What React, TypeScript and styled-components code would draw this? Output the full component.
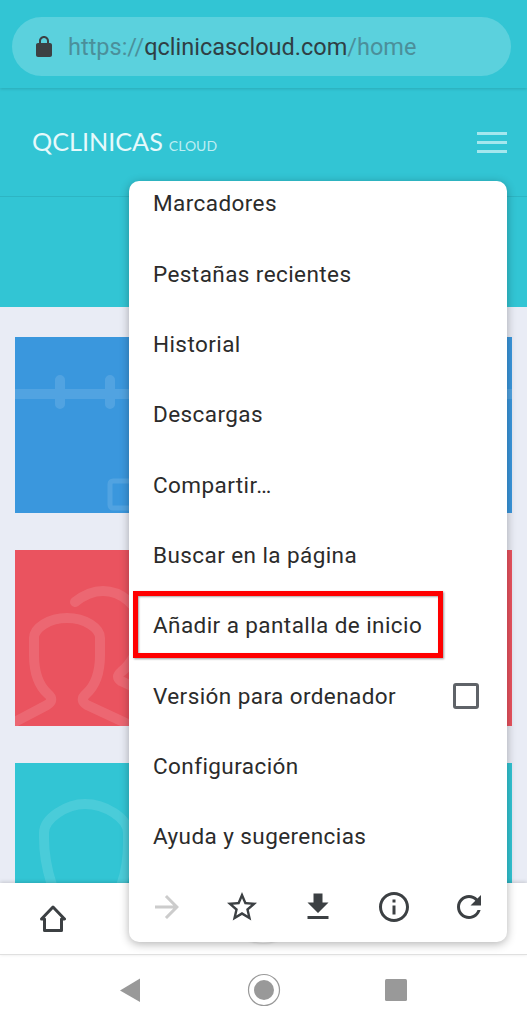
import React from 'react';
import styled, { createGlobalStyle } from 'styled-components';

const GlobalStyle = createGlobalStyle`
  html, body {
    margin: 0;
    padding: 0;
    background: #fff;
    font-family: Roboto, "Liberation Sans", sans-serif;
  }
`;

const Screen = styled.div`
  position: relative;
  display: flex;
  flex-direction: column;
  width: 527px;
  height: 1024px;
  overflow: hidden;
`;

const Toolbar = styled.div`
  position: relative;
  z-index: 2;
  height: 88px;
  box-sizing: border-box;
  padding: 17px 16px 12px 12px;
  background: #32c5d4;
  box-shadow: 0 1px 3px rgba(0, 0, 0, 0.14);
`;

const AddressBar = styled.div`
  display: flex;
  align-items: center;
  height: 59px;
  padding-left: 20px;
  border-radius: 30px;
  background: #5bd1dd;
  font-size: 23.5px;
  color: #4b8f9a;
`;

const LockIcon = styled.svg`
  width: 24px;
  height: 24px;
  margin-right: 12px;
  fill: #3c4043;
`;

const Domain = styled.span`
  color: #2f3f45;
`;

const SiteHeader = styled.header`
  display: flex;
  align-items: center;
  justify-content: space-between;
  height: 109px;
  box-sizing: border-box;
  padding: 0 20px 0 32px;
  background: #32c5d4;
  border-bottom: 1px solid #2db5c3;
`;

const Logo = styled.div`
  display: flex;
  align-items: baseline;
  gap: 6px;
  margin-top: -3px;
  font-family: Lato, sans-serif;
  font-size: 25.2px;
  color: #e6f9fb;
`;

const LogoSmall = styled.span`
  font-size: 14px;
  color: #bdeef3;
`;

const Hamburger = styled.div`
  display: flex;
  flex-direction: column;
  gap: 6px;
  width: 30px;
`;

const HamburgerBar = styled.span`
  height: 3px;
  background: #a5e7ee;
`;

const Hero = styled.div`
  height: 110px;
  background: #32c5d4;
`;

const Main = styled.main`
  flex: none;
  height: 576px;
  box-sizing: border-box;
  overflow: hidden;
  display: flex;
  flex-direction: column;
  gap: 37px;
  padding: 30px 15px 0;
  background: #e9ecf5;
`;

const Card = styled.div<{ $color: string }>`
  flex: none;
  height: 176px;
  background: ${(p) => p.$color};
`;

const Watermark = styled.svg`
  display: block;
  width: 100%;
  height: 100%;
  fill: none;
  stroke: rgba(255, 255, 255, 0.12);
  stroke-width: 10;
  stroke-linejoin: round;
  stroke-linecap: round;
`;

const BottomBar = styled.div`
  position: relative;
  z-index: 2;
  flex: none;
  display: grid;
  grid-template-columns: 105px 316px 106px;
  align-items: center;
  height: 72px;
  box-sizing: border-box;
  background: #fff;
  border-bottom: 1px solid #e0e0e0;
  box-shadow: 0 -1px 4px rgba(0, 0, 0, 0.16);
`;

const HomeIcon = styled.svg`
  justify-self: center;
  width: 26px;
  height: 27px;
  fill: none;
  stroke: #3c4043;
  stroke-width: 3;
  stroke-linejoin: round;
`;

const Fab = styled.div`
  justify-self: center;
  align-self: end;
  width: 66px;
  height: 60px;
  margin-bottom: 11px;
  border-radius: 50%;
  background: #fff;
  box-shadow: 0 1px 2px rgba(0, 0, 0, 0.12);
`;

const NavBar = styled.nav`
  flex: none;
  height: 69px;
  display: flex;
  align-items: center;
  justify-content: center;
  background: #fff;
`;

const NavIcon = styled.svg`
  width: 48px;
  height: 48px;
  margin: 0 41px;
  fill: #999;
  stroke: none;
`;

const Menu = styled.div`
  position: absolute;
  z-index: 3;
  top: 181px;
  left: 129px;
  width: 378px;
  height: 761px;
  overflow: hidden;
  border-radius: 10px;
  background: #fff;
  box-shadow: 0 2px 10px rgba(0, 0, 0, 0.3);
`;

const MenuList = styled.div`
  margin-top: -13px;
`;

const MenuItem = styled.div`
  display: flex;
  align-items: center;
  justify-content: space-between;
  height: 70.35px;
  padding: 0 28px 0 24px;
  font-size: 22.5px;
  letter-spacing: 0.42px;
  color: #2b2b2b;
`;

const Checkbox = styled.span`
  width: 26px;
  height: 26px;
  box-sizing: border-box;
  border: 3px solid #5f6368;
  border-radius: 3px;
`;

const IconRow = styled.div`
  display: grid;
  grid-template-columns: repeat(5, 1fr);
  height: 71px;
  place-items: center;
`;

const MenuIcon = styled.svg<{ $disabled?: boolean }>`
  width: 36px;
  height: 36px;
  fill: ${(p) => (p.$disabled ? '#cccccc' : '#3c4043')};
`;

const Highlight = styled.div`
  position: absolute;
  z-index: 4;
  top: 591px;
  left: 133px;
  width: 310px;
  height: 67px;
  box-sizing: border-box;
  border: 5px solid #ff0000;
  box-shadow: 1px 1px 2px rgba(0, 0, 0, 0.4), inset 1px 1px 2px rgba(0, 0, 0, 0.35);
`;

const menuLabels = [
  'Marcadores',
  'Pestañas recientes',
  'Historial',
  'Descargas',
  'Compartir…',
  'Buscar en la página',
  'Añadir a pantalla de inicio',
];

const menuIcons = [
  'M12 4l-1.41 1.41L16.17 11H4v2h12.17l-5.58 5.59L12 20l8-8z',
  'M22 9.24l-7.19-.62L12 2 9.19 8.63 2 9.24l5.46 4.73L5.82 21 12 17.27 18.18 21l-1.63-7.03L22 9.24zM12 15.4l-3.76 2.27 1-4.28-3.32-2.88 4.38-.38L12 6.1l1.71 4.04 4.38.38-3.32 2.88 1 4.28L12 15.4z',
  'M19 9h-4V3H9v6H5l7 7 7-7zM5 18v2h14v-2H5z',
  'M11 7h2v2h-2zm0 4h2v6h-2zm1-9C6.48 2 2 6.48 2 12s4.48 10 10 10 10-4.48 10-10S17.52 2 12 2zm0 18c-4.41 0-8-3.59-8-8s3.59-8 8-8 8 3.59 8 8-3.59 8-8 8z',
  'M17.65 6.35C16.2 4.9 14.21 4 12 4c-4.42 0-7.99 3.58-7.99 8s3.57 8 7.99 8c3.73 0 6.84-2.55 7.73-6h-2.08c-.82 2.33-3.04 4-5.65 4-3.31 0-6-2.69-6-6s2.69-6 6-6c1.66 0 3.14.69 4.22 1.78L13 11h7V4l-2.35 2.35z',
];

const App: React.FC = () => {
  return (
    <Screen>
      <GlobalStyle />
      <Toolbar>
        <AddressBar>
          <LockIcon viewBox="0 0 24 24">
            <path d="M18 8h-1V6c0-2.76-2.24-5-5-5S7 3.24 7 6v2H6c-1.1 0-2 .9-2 2v10c0 1.1.9 2 2 2h12c1.1 0 2-.9 2-2V10c0-1.1-.9-2-2-2zM9 8V6c0-1.66 1.34-3 3-3s3 1.34 3 3v2H9z" />
          </LockIcon>
          https://<Domain>qclinicascloud.com</Domain>/home
        </AddressBar>
      </Toolbar>

      <SiteHeader>
        <Logo>
          QCLINICAS <LogoSmall>CLOUD</LogoSmall>
        </Logo>
        <Hamburger>
          <HamburgerBar />
          <HamburgerBar />
          <HamburgerBar />
        </Hamburger>
      </SiteHeader>
      <Hero />

      <Main>
        <Card $color="#3a97dd">
          <Watermark viewBox="0 0 497 176">
            <path d="M-5 57H497M45 43V67M95 43V67" />
            <rect x="95" y="144" width="60" height="27" rx="3" strokeWidth="5" />
          </Watermark>
        </Card>
        <Card $color="#ea535f">
          <Watermark viewBox="0 0 497 176">
            <path d="M-6 175L32 155Q40 150 33 144C24 136 19 122 19 105V88C19 78 34 68 52 68C70 68 85 78 85 88V105C85 122 80 136 71 144Q64 150 72 155L115 175" />
            <path d="M60 52C70 44 78 41 88 41C105 41 125 55 125 75V85C125 100 115 115 106 122Q100 127 106 131L125 140" />
          </Watermark>
        </Card>
        <Card $color="#32c5d4">
          <Watermark viewBox="0 0 497 176">
            <path d="M38 125C31 105 29 90 29 75V70C29 55 52 41 70 41C90 41 113 55 113 70V80C113 100 110 115 103 130" />
          </Watermark>
        </Card>
      </Main>

      <BottomBar>
        <HomeIcon viewBox="0 0 26 27">
          <path d="M1.5 14L13 2L24.5 14H21.5V25.5H4.5V14Z" />
        </HomeIcon>
        <Fab />
      </BottomBar>
      <NavBar>
        <NavIcon viewBox="0 0 48 48">
          <path d="M30 12.5V36L10 24.5Z" />
        </NavIcon>
        <NavIcon viewBox="0 0 48 48">
          <circle cx="24" cy="24" r="10" />
          <circle cx="24" cy="24" r="15.5" fill="none" stroke="#999" strokeWidth="1.2" />
        </NavIcon>
        <NavIcon viewBox="0 0 48 48">
          <rect x="15" y="13" width="22" height="22" rx="1.5" />
        </NavIcon>
      </NavBar>

      <Menu>
        <MenuList>
          {menuLabels.map((label) => (
            <MenuItem key={label}>{label}</MenuItem>
          ))}
          <MenuItem>
            Versión para ordenador
            <Checkbox />
          </MenuItem>
          <MenuItem>Configuración</MenuItem>
          <MenuItem>Ayuda y sugerencias</MenuItem>
        </MenuList>
        <IconRow>
          {menuIcons.map((d, i) => (
            <MenuIcon key={d} viewBox="0 0 24 24" $disabled={i === 0}>
              <path d={d} />
            </MenuIcon>
          ))}
        </IconRow>
      </Menu>
      <Highlight />
    </Screen>
  );
};

export default App;
